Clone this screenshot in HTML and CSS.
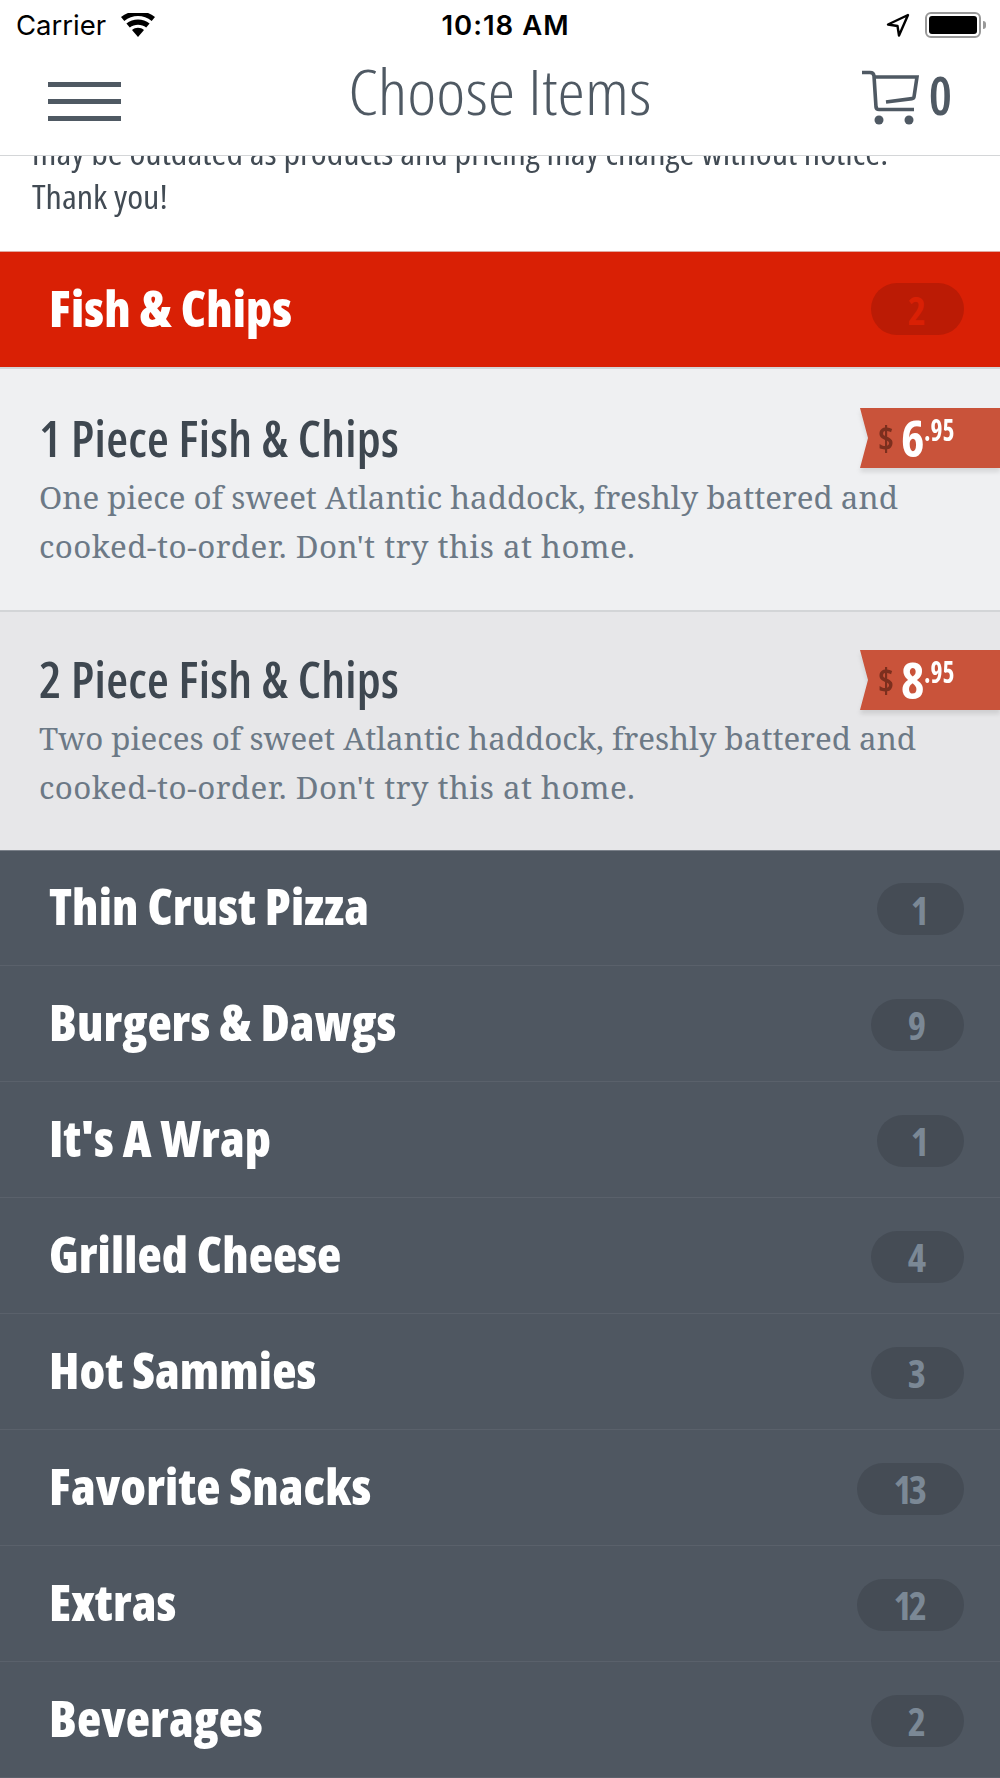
FILE: index.html
```html
<!DOCTYPE html>
<html lang="en">
<head>
    <meta charset="UTF-8">
    <meta name="viewport" content="width=device-width, initial-scale=1.0">
    <title>Choose Items</title>
    <link rel="stylesheet" href="styles.css">
</head>
<body>
    <div class="status-bar">
        <div class="status-left">
            <span class="carrier">Carrier</span>
            <svg class="wifi" viewBox="0 0 34 24" width="34" height="24">
                <path d="M17 24l-6-7c3.400-3 8.600-3 12 0z"/>
                <path d="M8.800 14.500l-3.400-4c6.600-5.500 16.600-5.500 23.200 0l-3.400 4c-4.700-3.800-11.700-3.800-16.400 0z"/>
                <path d="M3.300 8l-3.300-3.900c9.700-8 24.300-8 34 0l-3.300 3.900c-8-6.600-19.400-6.600-27.400 0z"/>
            </svg>
        </div>
        <span class="clock">10:18 AM</span>
        <div class="status-right">
            <svg class="arrow" viewBox="0 0 24 24" width="24" height="24">
                <path d="M22 2L2 11.500l9.500 1.500 1.500 9.500z" fill="none" stroke="#000" stroke-width="2.400" stroke-linejoin="round"/>
            </svg>
            <div class="battery"><div class="battery-fill"></div></div>
            <div class="battery-cap"></div>
        </div>
    </div>

    <div class="nav">
        <div class="burger"><span></span><span></span><span></span></div>
        <div class="nav-title">Choose Items</div>
        <div class="cart">
            <svg viewBox="0 0 60 60" width="60" height="60">
                <path d="M3 5.500h8c2.500 0 3.800 1 4 3.500l2 31c.2 2 1.300 2.500 3 2.500h35" fill="none" stroke="#4f5963" stroke-width="3.600"/>
                <path d="M15 10h43l-3 20c-.2 1-.8 1.500-2 1.600L27 35" fill="none" stroke="#4f5963" stroke-width="3.600"/>
                <circle cx="20" cy="53" r="4.500" fill="#4f5963"/>
                <circle cx="50" cy="53" r="4.500" fill="#4f5963"/>
            </svg>
            <span class="cart-count">0</span>
        </div>
    </div>

    <div class="notice">
        <p>may be outdated as products and pricing may change without notice.<br>Thank you!</p>
    </div>

    <div class="cat cat-active">
        <span class="cat-name">Fish &amp; Chips</span>
        <span class="pill pill-wide">2</span>
    </div>

    <div class="item">
        <h3>1 Piece Fish &amp; Chips</h3>
        <p>One piece of sweet Atlantic haddock, freshly battered and<br><span class="second-line">cooked-to-order. Don't try this at home.</span></p>
        <div class="price-wrap">
            <div class="price"><span class="dollar">$</span><span class="whole">6</span><span class="cents">.95</span></div>
        </div>
    </div>

    <div class="item item-alt">
        <h3>2 Piece Fish &amp; Chips</h3>
        <p>Two pieces of sweet Atlantic haddock, freshly battered and<br><span class="second-line">cooked-to-order. Don't try this at home.</span></p>
        <div class="price-wrap">
            <div class="price"><span class="dollar">$</span><span class="whole">8</span><span class="cents">.95</span></div>
        </div>
    </div>

    <div class="cat"><span class="cat-name">Thin Crust Pizza</span><span class="pill">1</span></div>
    <div class="cat"><span class="cat-name">Burgers &amp; Dawgs</span><span class="pill pill-wide">9</span></div>
    <div class="cat"><span class="cat-name">It's A Wrap</span><span class="pill">1</span></div>
    <div class="cat"><span class="cat-name">Grilled Cheese</span><span class="pill pill-wide">4</span></div>
    <div class="cat"><span class="cat-name">Hot Sammies</span><span class="pill pill-wide">3</span></div>
    <div class="cat"><span class="cat-name">Favorite Snacks</span><span class="pill pill-double">13</span></div>
    <div class="cat"><span class="cat-name">Extras</span><span class="pill pill-double">12</span></div>
    <div class="cat"><span class="cat-name">Beverages</span><span class="pill pill-wide">2</span></div>
</body>
</html>
```

FILE: styles.css
```css
body {
    margin: 0;
    background: #4f5761;
    font-family: "Open Sans", sans-serif;
    font-stretch: 75%;
    overflow: hidden;
}

.status-bar {
    height: 50px;
    background: white;
    display: grid;
    grid-template-columns: 1fr auto 1fr;
    align-items: center;
    padding: 0 14px 0 16px;
    font-family: Inter, sans-serif;
    font-stretch: normal;
    font-size: 27.500px;
    color: #000;
}

.status-left, .status-right {
    display: flex;
    align-items: center;
}

.status-right {
    justify-content: flex-end;
}

.wifi {
    margin-left: 15px;
}

.clock {
    font-weight: 600;
    letter-spacing: 1px;
    margin-left: 9px;
}

.arrow {
    margin-right: 15px;
}

.battery {
    width: 48px;
    height: 18px;
    border: 2px solid #999;
    border-radius: 6px;
    padding: 2px;
}

.battery-fill {
    height: 100%;
    background: #000;
    border-radius: 3px;
}

.battery-cap {
    width: 3px;
    height: 8px;
    background: #999;
    margin-left: 2px;
    border-radius: 0 3px 3px 0;
}

.nav {
    height: 105px;
    background: white;
    border-bottom: 1px solid #d4d6d8;
    display: grid;
    grid-template-columns: 1fr auto 1fr;
    align-items: center;
    padding: 0 48px;
    color: #4f5963;
}

.burger {
    width: 73px;
    display: flex;
    flex-direction: column;
    gap: 12px;
    margin-bottom: 2px;
}

.burger span {
    height: 5px;
    background: #4f5963;
}

.nav-title {
    font-size: 63px;
    font-weight: 300;
    line-height: 70px;
    margin-bottom: 24px;
    transform: scaleX(1.1);
}

.cart {
    display: flex;
    align-items: center;
    justify-content: flex-end;
    margin-bottom: 12px;
}

.cart-count {
    font-size: 52px;
    font-weight: 600;
    line-height: 60px;
    margin-left: 10px;
    margin-bottom: 4px;
}

.notice {
    height: 95px;
    overflow: hidden;
    background: white;
    display: flex;
    align-items: flex-end;
    padding: 0 32px;
}

.notice p {
    margin: 0 0 32px;
    font-size: 33px;
    font-weight: 500;
    line-height: 44px;
    color: #424b54;
    white-space: nowrap;
    transform: scaleX(1.097);
    transform-origin: left;
}

.cat {
    height: 115px;
    border-bottom: 1px solid #5a616b;
    background: #4f5761;
    display: flex;
    align-items: center;
    justify-content: space-between;
    padding: 0 36px 0 49px;
}

.item-alt + .cat {
    height: 114px;
}

.cat-name {
    font-size: 50px;
    font-weight: 800;
    letter-spacing: 0.100px;
    color: white;
    margin-top: -4px;
}

.pill {
    height: 52px;
    margin-top: 2px;
    padding: 0 38px 0 34px;
    border-radius: 26px;
    background: #454c55;
    color: #7b8895;
    font-size: 39px;
    font-weight: 700;
    letter-spacing: -3px;
    display: flex;
    align-items: center;
    justify-content: center;
}

.pill-wide {
    padding: 0 41px 0 37px;
}

.pill-double {
    padding: 0 40px 0 36px;
}

.cat-active {
    background: #d92005;
    border-top: 1px solid #e0a9a0;
    border-bottom: 2px solid #d3d5d7;
}

.cat-active .pill {
    margin-top: -1px;
    background: #bb1b05;
    color: #d92005;
}

.item {
    height: 241px;
    background: #eff0f2;
    border-bottom: 2px solid #d3d5d7;
    padding: 0 39px;
    position: relative;
}

.item-alt {
    height: 238px;
    background: #e7e7e9;
    border-bottom: 1px solid #7a8089;
}

.item h3 {
    margin: 0;
    padding-top: 35px;
    font-size: 50px;
    line-height: 69px;
    font-weight: 600;
    letter-spacing: 0.300px;
    color: #3e4750;
}

.item-alt h3 {
    padding-top: 33px;
}

.item p {
    margin: 0;
    font-family: "Noto Serif", serif;
    font-stretch: normal;
    font-size: 31.300px;
    line-height: 49px;
    color: #6c7986;
    white-space: nowrap;
}

.second-line {
    letter-spacing: 0.450px;
}

.price-wrap {
    position: absolute;
    right: 0;
    top: 39px;
    filter: drop-shadow(0 4px 2px rgba(0, 0, 0, 0.1));
}

.item-alt .price-wrap {
    top: 38px;
}

.price {
    width: 140px;
    height: 60px;
    box-sizing: border-box;
    padding-left: 18px;
    background: #c9533a;
    clip-path: polygon(0 0, 100% 0, 100% 100%, 0 100%, 8px 50%);
    display: flex;
    align-items: center;
    font-weight: 700;
    color: white;
}

.dollar {
    font-size: 34px;
    color: #7c2f1e;
    margin-right: 7px;
}

.whole {
    font-size: 50px;
}

.cents {
    font-size: 30px;
    align-self: flex-start;
    margin-top: 1px;
    transform: scaleX(0.85);
    transform-origin: left;
}
```
